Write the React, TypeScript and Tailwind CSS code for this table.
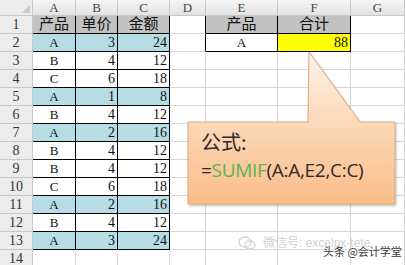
import React from "react";

const cols = ["A", "B", "C", "D", "E", "F", "G"];

const data: [string, string, string][] = [
  ["产品", "单价", "金额"],
  ["A", "3", "24"],
  ["B", "4", "12"],
  ["C", "6", "18"],
  ["A", "1", "8"],
  ["B", "4", "12"],
  ["A", "2", "16"],
  ["B", "4", "12"],
  ["B", "4", "12"],
  ["C", "6", "18"],
  ["A", "2", "16"],
  ["B", "4", "12"],
  ["A", "3", "24"],
];

const serif = { fontFamily: '"Liberation Serif", "Noto Sans CJK SC", serif' };

function Cell({ row, col }: { row: number; col: number }) {
  // row: 1..14, col: 0..6 (A..G)
  let text = "";
  let align = "justify-center";
  let bg = "bg-white";
  let br = "border-r-[#d6d6d6]";
  let bb = "border-b-[#d6d6d6]";
  let size = "text-[14px]";

  const inTable = row <= 13 && col <= 2;
  const inSum = row <= 2 && (col === 4 || col === 5);

  if (inTable) {
    const r = data[row - 1];
    text = r[col];
    br = "border-r-black";
    bb = "border-b-black";
    if (row === 1) {
      bg = "bg-[#c2c2c2]";
      size = "text-[15px]";
    } else {
      if (r[0] === "A") bg = "bg-[#b6dde6]";
      if (col > 0) align = "justify-end pr-[2px]";
      if (col === 0) size = "text-[13px]";
    }
  }
  if (inSum) {
    br = "border-r-black";
    bb = "border-b-black";
    if (row === 1) {
      bg = "bg-[#c2c2c2]";
      size = "text-[15px]";
      text = col === 4 ? "产品" : "合计";
    } else if (col === 4) {
      text = "A";
      size = "text-[13px]";
    } else {
      text = "88";
      bg = "bg-[#ffff00]";
      align = "justify-end pr-[2px]";
    }
  }
  if (col === 3 && row <= 2) br = "border-r-black";
  if (row === 14) bb = "border-b-transparent";

  return (
    <div
      className={`flex items-center border-r border-b ${br} ${bb} ${bg} ${align} ${size} text-[#111] leading-none`}
      style={serif}
    >
      {text}
    </div>
  );
}

export default function App() {
  const rows = Array.from({ length: 14 }, (_, i) => i + 1);
  return (
    <div className="relative w-[405px] h-[265px] overflow-hidden bg-white">
      <div className="grid grid-cols-[33px_43px_42px_52px_36px_72px_73px_1fr] grid-rows-[16px_repeat(14,18px)]">
        {/* corner */}
        <div className="relative bg-[#ececec] border-r border-b border-[#c8c8c8]">
          <div className="absolute right-[2px] bottom-[2px] w-0 h-0 border-l-[8px] border-l-transparent border-b-[8px] border-b-[#c9c9c9]" />
        </div>
        {cols.map((c) => (
          <div
            key={c}
            className="flex items-center justify-center bg-gradient-to-b from-[#f6f6f6] to-[#e2e2e2] border-r border-b border-[#c8c8c8] text-[13px] text-[#444] leading-none"
            style={serif}
          >
            {c}
          </div>
        ))}
        {rows.map((r) => (
          <React.Fragment key={r}>
            <div
              className="flex items-center justify-center bg-[#ececec] border-r border-b border-[#c8c8c8] text-[14px] text-[#333] leading-none"
              style={serif}
            >
              {r}
            </div>
            {cols.map((_, ci) => (
              <Cell key={ci} row={r} col={ci} />
            ))}
          </React.Fragment>
        ))}
      </div>

      {/* callout */}
      <div className="absolute left-[184px] top-[50px] w-[218px] h-[162px]">
        <svg width="218" height="162" viewBox="0 0 218 162" className="absolute inset-0">
          <defs>
            <linearGradient id="cg" x1="0" y1="0" x2="0" y2="1">
              <stop offset="0" stopColor="#fdf4ec" />
              <stop offset="0.45" stopColor="#fcd9ba" />
              <stop offset="1" stopColor="#fbbd88" />
            </linearGradient>
            <filter id="sh" x="-5%" y="-5%" width="115%" height="115%">
              <feDropShadow dx="1" dy="1.5" stdDeviation="1" floodColor="#000" floodOpacity="0.25" />
            </filter>
          </defs>
          <path
            d="M4 72 L124 72 L125 2 L176 72 L211 72 L211 154 L4 154 Z"
            fill="url(#cg)"
            stroke="#d9a77c"
            strokeWidth="1"
            filter="url(#sh)"
          />
        </svg>
        <div className="absolute left-[17px] top-[82px] flex flex-col gap-[9px] text-[#2b2b2b] leading-none whitespace-nowrap">
          <span className="text-[20px]" style={{ fontFamily: '"Noto Sans CJK SC", sans-serif' }}>
            公式:
          </span>
          <span className="text-[19px] tracking-[-0.3px]" style={{ fontFamily: '"Open Sans", "Liberation Sans", sans-serif' }}>
            =<span className="text-[#5fb255]">SUMIF</span>(A:A,E2,C:C)
          </span>
        </div>
      </div>

      {/* watermark */}
      <div
        className="absolute left-[238px] top-[236px] flex items-center gap-[7px] text-[#d0d0d0] text-[12px] leading-none whitespace-nowrap"
        style={{ fontFamily: '"Liberation Sans", "Noto Sans CJK SC", sans-serif' }}
      >
        <svg width="18" height="14" viewBox="0 0 18 14">
          <ellipse cx="7" cy="6" rx="6" ry="5" fill="none" stroke="#d4d4d4" strokeWidth="1.4" />
          <ellipse cx="12" cy="9" rx="5" ry="4" fill="none" stroke="#d4d4d4" strokeWidth="1.4" />
        </svg>
        <span>微信号: excelpx-tete</span>
      </div>
      <div
        className="absolute left-[323px] top-[246px] text-[11px] leading-none text-[#3a3a3a] whitespace-nowrap"
        style={{ fontFamily: '"Noto Sans CJK SC", sans-serif', textShadow: "0 0 2px #fff, 0 0 2px #fff" }}
      >
        头条 @会计学堂
      </div>
    </div>
  );
}
